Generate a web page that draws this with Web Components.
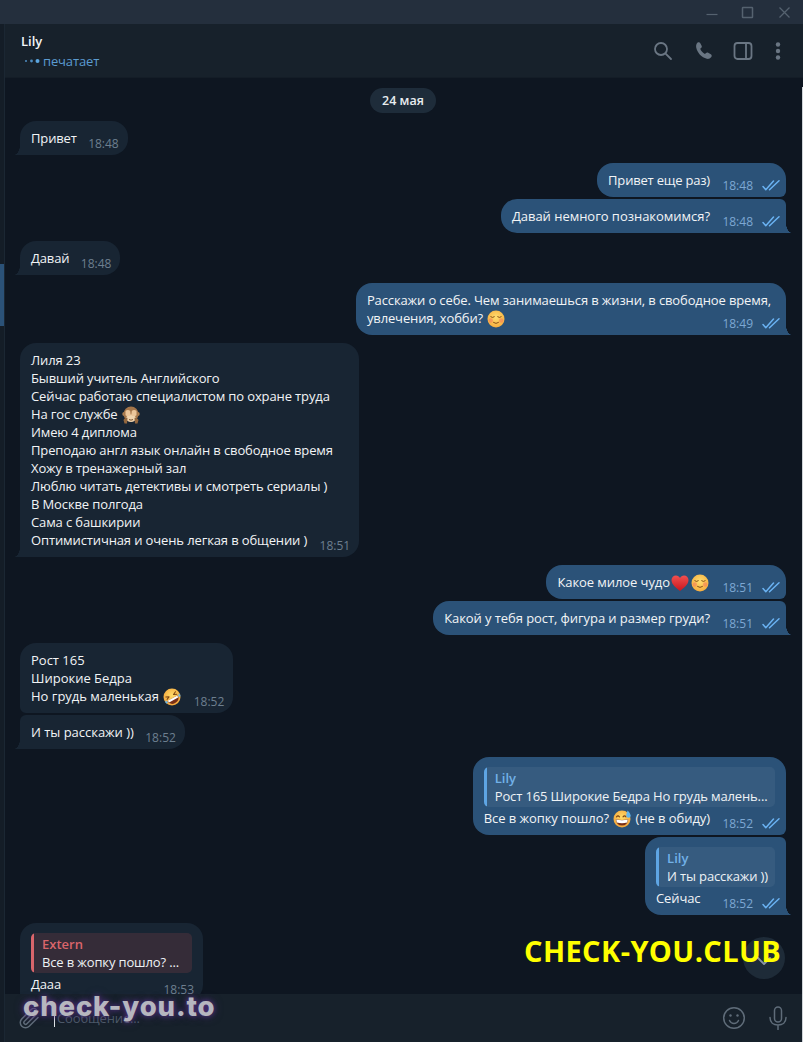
<!DOCTYPE html>
<html lang="ru"><head><meta charset="utf-8"><title>Chat</title>
<style>
html,body{margin:0;padding:0;background:#0e1621;overflow:hidden}
body{font-family:"Open Sans",sans-serif;font-size:13px;color:#f0f3f5;letter-spacing:-.14px}
</style></head><body>
<tg-window>
  <tg-chat>
    <chat-date>24 мая</chat-date>
    <chat-bubble kind="in" pos="last" time="18:48" class="first-gap">Привет</chat-bubble>
    <chat-bubble kind="out" pos="first" time="18:48" gap="8" style="letter-spacing:-.2px">Привет еще раз)</chat-bubble>
    <chat-bubble kind="out" pos="last" time="18:48" gap="2" style="letter-spacing:-.03px">Давай немного познакомимся?</chat-bubble>
    <chat-bubble kind="in" pos="last" time="18:48" gap="8">Давай</chat-bubble>
    <chat-bubble kind="out" pos="last" time="18:49" gap="8" style="--extra:9px;letter-spacing:-.125px">Расскажи о себе. Чем занимаешься в жизни, в свободное время,<br>увлечения, хобби? <chat-emoji name="relaxed"></chat-emoji></chat-bubble>
    <chat-bubble kind="in" pos="last" time="18:51" gap="8" style="letter-spacing:-.12px;--extra:1px">Лиля 23<br>Бывший учитель Английского<br>Сейчас работаю специалистом по охране труда<br>На гос службе <chat-emoji name="monkey"></chat-emoji><br>Имею 4 диплома<br>Преподаю англ язык онлайн в свободное время<br>Хожу в тренажерный зал<br>Люблю читать детективы и смотреть сериалы )<br>В Москве полгода<br>Сама с башкирии<br>Оптимистичная и очень легкая в общении )</chat-bubble>
    <chat-bubble kind="out" pos="first" time="18:51" gap="8" style="letter-spacing:-.08px">Какое милое чудо<chat-emoji name="heart"></chat-emoji><chat-emoji name="relaxed"></chat-emoji></chat-bubble>
    <chat-bubble kind="out" pos="last" time="18:51" gap="2" style="letter-spacing:-.07px">Какой у тебя рост, фигура и размер груди?</chat-bubble>
    <chat-bubble kind="in" pos="first" time="18:52" gap="8" style="letter-spacing:0">Рост 165<br>Широкие Бедра<br>Но грудь маленькая <chat-emoji name="rofl"></chat-emoji></chat-bubble>
    <chat-bubble kind="in" pos="last" time="18:52" gap="2" style="letter-spacing:-.02px">И ты расскажи ))</chat-bubble>
    <chat-bubble kind="out" pos="first" time="18:52" gap="8" has-reply style="letter-spacing:-.07px"><chat-reply slot="reply" name="Lily">Рост 165 Широкие Бедра Но грудь малень...</chat-reply>Все в жопку пошло? <chat-emoji name="sweat"></chat-emoji> (не в обиду)</chat-bubble>
    <chat-bubble kind="out" pos="last" time="18:52" gap="2" has-reply><chat-reply slot="reply" name="Lily">И ты расскажи ))</chat-reply>Сейчас</chat-bubble>
    <chat-bubble kind="in" pos="last" time="18:53" gap="8" has-reply><chat-reply slot="reply" name="Extern" tone="red">Все в жопку пошло? ...</chat-reply>Дааа</chat-bubble>
  </tg-chat>
</tg-window>
<script>
const define=(name,css,html)=>{
  customElements.define(name,class extends HTMLElement{
    constructor(){super();const r=this.attachShadow({mode:"open"});
      r.innerHTML=`<style>${css}</style>${typeof html==="function"?html(this):html}`;}
    connectedCallback(){
      if(typeof html==="function"){this.shadowRoot.innerHTML=`<style>${css}</style>${html(this)}`;}
    }
  });
};
const ICON="fill:none;stroke:#6a7683;stroke-width:1.8;stroke-linecap:round;stroke-linejoin:round";

define("tg-titlebar",`
 :host{display:flex;justify-content:flex-end;height:24px;background:#242f3d;padding-right:1px;flex:none}
 svg{width:36px;height:24px;display:block;fill:none;stroke:#55626f;stroke-width:1.2}
`,`
 <svg viewBox="0 0 36 24"><path d="M12.5 14.5h11"/></svg>
 <svg viewBox="0 0 36 24"><rect x="12.5" y="7.5" width="10" height="10" rx=".5" stroke-width="1.5"/></svg>
 <svg viewBox="0 0 36 24"><path d="M13.5 7.5l10 10M23.5 7.5l-10 10" stroke-width="1.3"/></svg>
`);

define("tg-strip",`
 :host{display:flex;flex-direction:column;width:4px;flex:none;background:#141d27;border-right:1px solid #1b2733}
 .a{height:240px;flex:none}.b{height:62px;flex:none;background:#2b5278}.c{flex:1}
`,`<div class="a"></div><div class="b"></div><div class="c"></div>`);

define("tg-header",`
 :host{display:flex;align-items:center;justify-content:space-between;height:54px;box-sizing:border-box;background:#17212b;padding:0 1px 0 16px;flex:none;border-bottom:1px solid #141d27}
 .name{font-weight:600;font-size:13px;line-height:18px;color:#f3f5f7;letter-spacing:0}
 .status{display:flex;align-items:center;margin-top:2px;line-height:18px;color:#5b9bd1;font-size:13px;gap:2px}
 .status svg{width:17px;height:8px;margin-left:3px;display:block}
 .icons{display:flex;align-items:center}
 .icons svg{width:24px;height:24px;display:block;${ICON}}
 .s{margin-right:17px}.p{margin-right:15px}.b{margin-right:11px}
 .d{margin-right:12px;fill:#6a7683!important;stroke:none!important}
`,`
 <div><div class="name">Lily</div>
 <div class="status"><svg viewBox="0 0 17 8"><circle cx="2" cy="4" r="1" fill="#4f8ec4"/><circle cx="7.5" cy="4" r="1.4" fill="#4f8ec4"/><circle cx="13.5" cy="4" r="2" fill="#5ba6e0"/></svg><span>печатает</span></div></div>
 <div class="icons">
  <svg class="s" viewBox="0 0 24 24"><circle cx="10" cy="10" r="6"/><path d="M14.6 14.6l5.4 5.4"/></svg>
  <svg class="p" viewBox="0 0 24 24" style="fill:#6a7683;stroke:none"><path d="M5.6 3.6c1-.6 2.2-.4 2.7.6l1.3 2.6c.4.8.2 1.6-.5 2.2l-.9.7c.9 2.3 2.6 4.2 4.8 5.3l1-.9c.6-.6 1.5-.7 2.2-.3l2.6 1.5c1 .6 1.2 1.8.5 2.7-1.1 1.4-2.8 2.2-4.5 1.8C9.6 18.6 5.3 14 4.2 8.6 3.9 6.7 4.3 4.7 5.6 3.6z"/></svg>
  <svg class="b" viewBox="0 0 24 24"><rect x="3.5" y="4" width="17" height="16" rx="3"/><path d="M15 4v16"/></svg>
  <svg class="d" viewBox="0 0 24 24"><circle cx="12" cy="5.5" r="2.2"/><circle cx="12" cy="12" r="2.2"/><circle cx="12" cy="18.5" r="2.2"/></svg>
 </div>
`);

define("tg-chat",`
 :host{display:flex;flex-direction:column;flex:1;min-height:0;overflow:hidden;background:#0e1621;padding:10px 17px 0 15px}
`,`<slot></slot>`);

define("chat-date",`
 :host{display:block;align-self:center;height:25px;line-height:25px;padding:0 12px;border-radius:13px;background:#1e2c3a;color:#e9edf0;font-weight:600;font-size:12.5px;letter-spacing:0;flex:none}
`,`<slot></slot>`);

const CHECK=`<svg class="chk" viewBox="0 0 18 11"><path d="M1 6.5l2.8 3.3L11.5 1M7.5 9.8L17 .8" fill="none" stroke="#6ab2f2" stroke-width="1.5" stroke-linecap="round" stroke-linejoin="round"/></svg>`;
define("chat-bubble",`
 :host{display:block;flex:none;position:relative;align-self:flex-start;border-radius:16px;--c:#182533;background:var(--c);color:#f2f4f6;--meta:#6d7f8f}
 :host([kind=out]){align-self:flex-end;--c:#2b5278;--meta:#7da8d3;background:var(--c)}
 :host([kind=in][pos=last]){border-radius:6px 16px 16px 0}
 :host([kind=in][pos=first]){border-radius:16px 16px 16px 6px}
 :host([kind=out][pos=first]){border-radius:16px 16px 6px 16px}
 :host([kind=out][pos=last]){border-radius:16px 6px 0 16px}
 :host(.first-gap),:host([kind=in][pos=last]:not([gap="2"])){border-top-left-radius:16px}
 :host([kind=out][pos=last]:not([gap="2"])){border-top-right-radius:16px}
 :host([gap="8"]){margin-top:8px}
 :host([gap="2"]){margin-top:2px}
 :host(.first-gap){margin-top:8px}
 :host::after{content:"";position:absolute;bottom:0;width:6px;height:10px}
 :host([pos=first])::after{display:none}
 :host([kind=in])::after{left:-6px;background:radial-gradient(ellipse 6px 10px at 0 0,transparent 97%,var(--c) 100%)}
 :host([kind=out])::after{right:-6px;background:radial-gradient(ellipse 6px 10px at 100% 0,transparent 97%,var(--c) 100%)}
 .wrap{padding:8px 9px 3px 11px}
 :host([kind=out]) .wrap{padding:8px 6px 3px 11px}
 :host([has-reply]) .wrap{padding-top:10px}
 .cell{display:grid}
 .text,.meta{grid-area:1/1}
 .text{line-height:18px;white-space:nowrap;margin-bottom:5px;padding-right:var(--extra,0)}
 .sp{display:inline-block;width:42px;height:1px}
 :host([kind=out]) .sp{width:70px}
 .meta{justify-self:end;align-self:end;display:flex;align-items:center;font-size:12px;line-height:16px;color:var(--meta);gap:9px;letter-spacing:0}
 .chk{width:18px;height:11px;display:block;transform:translateY(-1px)}
 ::slotted(chat-reply){margin:0 2px 2px 0}
 :host([kind=out]) ::slotted(chat-reply){margin:0 5px 2px 0}
`,(el)=>`<div class="wrap"><slot name="reply"></slot><div class="cell"><div class="text"><slot></slot><span class="sp"></span></div><div class="meta"><span>${el.getAttribute("time")||""}</span>${el.getAttribute("kind")==="out"?CHECK:""}</div></div></div>`);

define("chat-reply",`
 :host{display:flex;height:40px;border-radius:5px;background:rgba(255,255,255,.055);overflow:hidden;white-space:nowrap}
 :host([tone=red]){background:rgba(231,90,90,.14)}
 .bar{width:3px;background:#5ea5e4;flex:none;border-radius:3px 0 0 3px}
 :host([tone=red]) .bar{background:#d9656b}
 .in{padding:2px 7px 0 8px}
 :host([tone=red]) .in{padding-right:13px}
 .n{font-weight:600;font-size:13px;line-height:18px;color:#72b1e8;letter-spacing:0}
 :host([tone=red]) .n{color:#d9656b}
 .t{line-height:19px;color:#eef2f5;letter-spacing:-.14px}
`,(el)=>`<div class="bar"></div><div class="in"><div class="n">${el.getAttribute("name")||""}</div><div class="t"><slot></slot></div></div>`);

const FACE=(id,a,b)=>`<defs><radialGradient id="${id}" cx=".5" cy=".4" r=".65"><stop offset="0" stop-color="${a}"/><stop offset="1" stop-color="${b}"/></radialGradient></defs><circle cx="9" cy="9" r="8.5" fill="url(#${id})"/>`;
const EMOJI={
 relaxed:FACE("r","#ffdf70","#f6a93a")+`<circle cx="3.8" cy="10.5" r="2.2" fill="#f47a5a" opacity=".55"/><circle cx="14.2" cy="10.5" r="2.2" fill="#f47a5a" opacity=".55"/><path d="M3.8 6.8q1.8 1.5 3.5 0M10.7 6.8q1.7 1.5 3.5 0M6.5 12.5q2.5 2 5 0" fill="none" stroke="#7a4310" stroke-width=".9" stroke-linecap="round"/>`,
 sweat:FACE("s","#ffdc6a","#f3a035")+`<path d="M3.5 6.8q1.5-1.8 3 0M10 6.8q1.5-1.8 3 0" fill="none" stroke="#7a4310" stroke-width="1.1" stroke-linecap="round"/><path d="M2.8 9.3q6.2 1.5 12.4 0q-.6 6.3-6.2 6.3t-6.2-6.3z" fill="#7a2f16"/><path d="M3.2 9.6q5.8 1.3 11.6 0l-.6 3q-5.2 1.2-10.4 0z" fill="#fff"/><path d="M14.7 .5q3 3 3 5a2.2 2.2 0 0 1-4.5 0q0-2 1.5-5z" fill="#62b6ee"/>`,
 rofl:FACE("f","#ffdc6a","#f3a035")+`<g transform="rotate(-28 9 9)"><path d="M3.5 6l3 1.5-3 1.3M14.5 6l-3 1.5 3 1.3" fill="none" stroke="#7a4310" stroke-width="1" stroke-linecap="round" stroke-linejoin="round"/><path d="M3 10.2h12q-.6 5.6-6 5.6t-6-5.6z" fill="#7a2f16"/><path d="M3.4 10.2h11.2l-.5 2.2H3.9z" fill="#fff"/><path d="M1.5 9q-1.5 2-.5 3t2-.5zM16.5 9q1.5 2 .5 3t-2-.5z" fill="#62b6ee"/></g>`,
 heart:`<defs><linearGradient id="h" x1="0" y1="0" x2="0" y2="1"><stop offset="0" stop-color="#f2504f"/><stop offset="1" stop-color="#c9161f"/></linearGradient></defs><path d="M9 17C5 13.5 .5 10.5 .5 6 .5 3.3 2.6 1.5 5 1.5c1.8 0 3.2 1 4 2.5.8-1.5 2.2-2.5 4-2.5 2.4 0 4.5 1.8 4.5 4.5 0 4.5-4.5 7.5-8.5 11z" fill="url(#h)"/>`,
 monkey:`<circle cx="2.3" cy="8" r="2" fill="#b88a58"/><circle cx="15.7" cy="8" r="2" fill="#b88a58"/><circle cx="9" cy="8" r="7.5" fill="#a5764a"/><ellipse cx="9" cy="12.3" rx="4.8" ry="3.8" fill="#f0d4ae"/><path d="M3.5 5c1.3-1.5 3.5-1.5 4.7 0l.5 4.2c-1 1.2-4 1.2-5.2 0zM14.5 5c-1.3-1.5-3.5-1.5-4.7 0l-.5 4.2c1 1.2 4 1.2 5.2 0z" fill="#ecc69a"/><path d="M1.5 14c1-2 3-2.5 4-2l-.5 5.5H2.5zM16.5 14c-1-2-3-2.5-4-2l.5 5.5h2.5z" fill="#93673e"/><path d="M7 13.5q2 1.3 4 0" fill="none" stroke="#6d4420" stroke-width=".9"/>`
};
define("chat-emoji",`
 :host{display:inline-block;width:18px;height:18px;vertical-align:-3px;margin:-2px 1px}
 svg{display:block;width:18px;height:18px}
`,(el)=>`<svg viewBox="0 0 18 18">${EMOJI[el.getAttribute("name")]||""}</svg>`);

define("tg-composer",`
 :host{display:flex;align-items:center;height:48px;flex:none;background:#17212b;padding:0 13px 0 11px;box-sizing:border-box}
 svg{display:block;flex:none;${ICON.replace("#6a7683","#5f6c79")}}
 .clip{width:26px;height:26px;stroke-width:1.5}
 .cur{width:1px;height:18px;background:#dfe4e8;margin-left:12px;flex:none}
 .ph{margin-left:2px;color:#4d5b69;flex:1}
 .em{width:24px;height:24px;margin-right:20px;stroke-width:1.5}
 .mic{width:24px;height:24px;stroke-width:1.5}
`,`
 <svg class="clip" viewBox="0 0 26 26"><path d="M22 12.5l-8.8 8.8a5.2 5.2 0 0 1-7.4-7.4l9.4-9.4a3.5 3.5 0 0 1 5 5l-9.3 9.3a1.7 1.7 0 0 1-2.5-2.5l8.2-8.1"/></svg>
 <div class="cur"></div><div class="ph">Сообщение...</div>
 <svg class="em" viewBox="0 0 24 24"><circle cx="12" cy="12" r="10.3"/><circle cx="8.5" cy="9.5" r="1.2" fill="#5f6c79" stroke="none"/><circle cx="15.5" cy="9.5" r="1.2" fill="#5f6c79" stroke="none"/><path d="M7.5 14.5c1 2 2.6 3 4.5 3s3.5-1 4.5-3"/></svg>
 <svg class="mic" viewBox="0 0 24 24"><rect x="8.5" y="1" width="7" height="15" rx="3.5"/><path d="M4 11.5c0 5 3.5 7.5 8 7.5s8-2.5 8-7.500M12 19v4.500"/></svg>
`);

define("tg-window",`
 :host{display:flex;flex-direction:column;width:803px;height:1042px;position:relative;overflow:hidden;background:#0e1621}
 .row{display:flex;flex:1;min-height:0}
 .col{display:flex;flex-direction:column;flex:1;min-width:0}
 .scroll{position:absolute;left:743px;top:937px;width:42px;height:42px;border-radius:50%;background:#1e2b38;display:flex;align-items:center;justify-content:center}
 .scroll svg{width:18px;height:18px;display:block;margin-top:6px;fill:none;stroke:#8a96a2;stroke-width:1.8;stroke-linecap:round;stroke-linejoin:round}
 .yellow{position:absolute;left:524px;top:931px;font:700 29px/40px "Open Sans",sans-serif;color:#ffff00;white-space:nowrap;letter-spacing:.4px}
 .mark{position:absolute;left:23px;top:989px;font:800 27.5px/34px "Inter",sans-serif;color:#b6b6bf;white-space:nowrap;letter-spacing:.85px;text-shadow:0 0 5px rgba(90,50,140,.9),0 0 10px rgba(90,50,140,.6)}
 .edge{position:absolute;right:0;top:87px;bottom:0;width:1px;background:#cfd4d8}
`,`
 <tg-titlebar></tg-titlebar>
 <div class="row"><tg-strip></tg-strip>
  <div class="col"><tg-header></tg-header><slot></slot><tg-composer></tg-composer></div>
 </div>
 <div class="scroll"><svg viewBox="0 0 18 18"><path d="M3 6l6 6 6-6"/></svg></div>
 <div class="yellow">CHECK-YOU.CLUB</div>
 <div class="mark">check-you.to</div>
 <div class="edge"></div>
`);
</script>
</body></html>
